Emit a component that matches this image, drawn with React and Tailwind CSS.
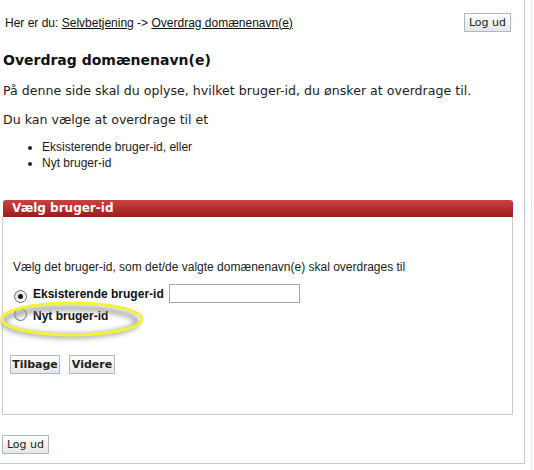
import React from 'react'

const verdana = { fontFamily: '"DejaVu Sans", Verdana, sans-serif' }
const arial = { fontFamily: '"Liberation Sans", Arial, sans-serif' }

function Radio({ checked }) {
  return (
    <span className="inline-flex w-[13px] h-[13px] rounded-full border border-[#6f6f6f] bg-gradient-to-br from-[#dcdcdc] to-white items-center justify-center shrink-0">
      {checked && <span className="w-[5px] h-[5px] rounded-full bg-[#1a1a1a]" />}
    </span>
  )
}

function Btn({ children, className = '' }) {
  return (
    <button
      className={`h-[19px] border border-[#a9b8cc] bg-gradient-to-b from-white to-[#e6e6e6] text-[11px] text-[#222] leading-none ${className}`}
      style={verdana}
    >
      {children}
    </button>
  )
}

export default function App() {
  return (
    <div className="w-[534px] h-[470px] bg-white relative overflow-hidden flex">
      <div className="w-[525px] h-[464px] border-r border-b border-[#c9c9c9] shrink-0 text-[#111]">
        {/* breadcrumb */}
        <div className="flex items-center justify-between pl-[5px] pr-[13px] pt-[13px]">
          <div className="text-[12px] text-[#111]" style={arial}>
            Her er du: <a className="underline text-[#111]">Selvbetjening</a> -&gt;{' '}
            <a className="underline text-[#111]">Overdrag domænenavn(e)</a>
          </div>
          <Btn className="w-[47px]">Log ud</Btn>
        </div>

        <h1 className="font-bold text-[14px] leading-[20px] mt-[18px] pl-[3px] text-[#111]" style={verdana}>
          Overdrag domænenavn(e)
        </h1>

        <p className="text-[12.6px] leading-[16px] mt-[13px] pl-[3px] text-[#222]" style={verdana}>
          På denne side skal du oplyse, hvilket bruger-id, du ønsker at overdrage til.
        </p>
        <p className="text-[12.6px] leading-[16px] mt-[13px] pl-[3px] text-[#222]" style={verdana}>
          Du kan vælge at overdrage til et
        </p>

        <ul className="mt-[11px] pl-[42px] text-[12px] leading-[16px] text-[#222] list-disc" style={arial}>
          <li>Eksisterende bruger-id, eller</li>
          <li>Nyt bruger-id</li>
        </ul>

        {/* section */}
        <div className="mt-[29px] ml-[3px] w-[510px]">
          <div
            className="h-[17px] rounded-t-[3px] bg-gradient-to-b from-[#cc4141] to-[#9c1b1b] text-white font-bold text-[12px] leading-[17px] pl-[9px]"
            style={verdana}
          >
            Vælg bruger-id
          </div>
          <div className="h-[198px] border border-t-0 border-[#c9c9c9] -ml-[1px] pl-[10px] pt-[42px]" style={arial}>
            <div className="text-[12px] leading-[16px] text-[#222]">
              Vælg det bruger-id, som det/de valgte domænenavn(e) skal overdrages til
            </div>
            <div className="flex items-center mt-[9px] h-[19px]">
              <span className="ml-[1px]"><Radio checked /></span>
              <span className="ml-[6px] font-bold text-[12px] text-[#111]">Eksisterende bruger-id</span>
              <input className="ml-[5px] w-[131px] h-[19px] border border-[#a8a8a8] bg-white" />
            </div>
            <div className="flex items-center mt-[3px] h-[19px]">
              <span className="ml-[1px]"><Radio /></span>
              <span className="ml-[6px] font-bold text-[12px] text-[#111]">Nyt bruger-id</span>
            </div>
            <div className="flex gap-[9px] mt-[30px] -ml-[3px]">
              <Btn className="w-[50px] font-bold">Tilbage</Btn>
              <Btn className="w-[46px] font-bold">Videre</Btn>
            </div>
          </div>
        </div>

        <div className="mt-[15px] ml-[2px]">
          <Btn className="w-[47px]">Log ud</Btn>
        </div>
      </div>
      <div className="ml-[6px] w-px h-full bg-[#e4e4e4]" />

      {/* highlight annotation */}
      <svg className="absolute left-0 top-[297px]" width="150" height="46" viewBox="0 0 150 46">
        <defs>
          <filter id="blur" x="-20%" y="-50%" width="140%" height="200%">
            <feGaussianBlur stdDeviation="2.5" />
          </filter>
        </defs>
        <ellipse cx="70" cy="25" rx="67" ry="14" fill="none" stroke="#8a8a8a" strokeWidth="5" opacity="0.75" filter="url(#blur)" />
        <ellipse cx="72" cy="22" rx="70" ry="16" fill="none" stroke="#f2f23a" strokeWidth="3" />
      </svg>
    </div>
  )
}
